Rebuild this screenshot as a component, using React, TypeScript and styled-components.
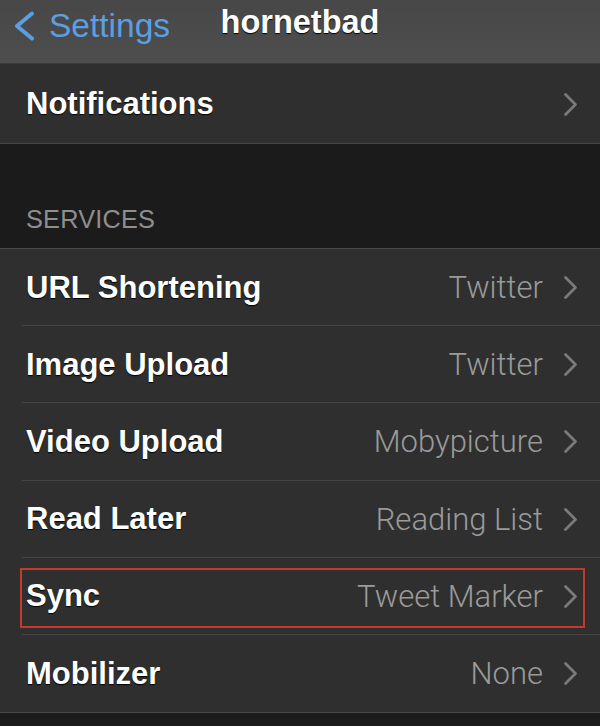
import React from "react";
import styled, { createGlobalStyle } from "styled-components";

const GlobalStyle = createGlobalStyle`
  html, body {
    margin: 0;
    padding: 0;
    background: #1b1b1b;
  }
  body {
    font-family: "Liberation Sans", Arial, sans-serif;
  }
`;

const Screen = styled.div`
  width: 600px;
  min-height: 726px;
  background: #1b1b1b;
  overflow: hidden;
`;

const NavBar = styled.div`
  position: relative;
  height: 63px;
  display: flex;
  align-items: flex-start;
  justify-content: center;
  background: linear-gradient(#474747, #4e4e4e);
  border-bottom: 1px solid #3a3a3a;
`;

const BackButton = styled.div`
  position: absolute;
  left: 12px;
  top: 8px;
  display: flex;
  align-items: center;
  gap: 13px;
  color: #5b9fe2;
  font-size: 33.5px;
  line-height: 36px;
`;

const Title = styled.div`
  margin-top: 4px;
  color: #ffffff;
  font-size: 32.5px;
  font-weight: bold;
  line-height: 36px;
  text-shadow: 0 1px 1px #000;
`;

const Group = styled.div<{ $top?: boolean }>`
  background: #2f2f2f;
  border-top: 1px solid ${(p) => (p.$top ? "#4a4a4a" : "transparent")};
  border-bottom: 1px solid #474747;
`;

const SectionHeader = styled.div`
  height: 104px;
  display: flex;
  align-items: flex-end;
  padding: 0 0 14px 26px;
  box-sizing: border-box;
  color: #8e8e8e;
  font-size: 25.3px;
  letter-spacing: 0.2px;
`;

const Row = styled.div<{ $last?: boolean; $tall?: boolean }>`
  position: relative;
  height: ${(p) => (p.$tall ? "78px" : "77.2px")};
  display: flex;
  align-items: center;
  padding: 0 22px 0 26px;
  box-sizing: border-box;
  &::after {
    content: "";
    display: ${(p) => (p.$last ? "none" : "block")};
    position: absolute;
    left: 22px;
    right: 0;
    bottom: 0;
    height: 1px;
    background: #454545;
  }
`;

const Label = styled.div`
  flex: 1;
  color: #ffffff;
  font-size: 31px;
  font-weight: bold;
  text-shadow: 0 1px 1px #000;
`;

const Value = styled.div`
  color: #9a9a9a;
  font-family: Roboto, "Liberation Sans", sans-serif;
  font-weight: 300;
  font-size: 31px;
  margin-right: 20px;
`;

const Highlight = styled.div`
  position: absolute;
  left: 20px;
  right: 15px;
  top: 10px;
  bottom: 7px;
  border: 2px solid #c23a2b;
  pointer-events: none;
`;

const Chevron = () => (
  <svg width="15" height="25" viewBox="0 0 15 25">
    <path d="M2.5 2.5 L12.5 12.5 L2.5 22.5" fill="none" stroke="#7a7a7a" strokeWidth="2.8" strokeLinecap="round" strokeLinejoin="round" />
  </svg>
);

const BackChevron = () => (
  <svg width="24" height="30" viewBox="0 0 24 30">
    <path d="M20 2.5 L5 15 L20 27.5" fill="none" stroke="#5b9fe2" strokeWidth="4" strokeLinecap="round" strokeLinejoin="round" />
  </svg>
);

const services = [
  { label: "URL Shortening", value: "Twitter" },
  { label: "Image Upload", value: "Twitter" },
  { label: "Video Upload", value: "Mobypicture" },
  { label: "Read Later", value: "Reading List" },
  { label: "Sync", value: "Tweet Marker", marked: true },
  { label: "Mobilizer", value: "None" },
];

export default function App() {
  return (
    <>
      <GlobalStyle />
      <Screen>
        <NavBar>
          <BackButton>
            <BackChevron />
            <span>Settings</span>
          </BackButton>
          <Title>hornetbad</Title>
        </NavBar>

        <Group>
          <Row $last $tall>
            <Label>Notifications</Label>
            <Chevron />
          </Row>
        </Group>

        <SectionHeader>SERVICES</SectionHeader>

        <Group $top>
          {services.map((s, i) => (
            <Row key={s.label} $last={i === services.length - 1}>
              <Label>{s.label}</Label>
              <Value>{s.value}</Value>
              <Chevron />
              {s.marked && <Highlight />}
            </Row>
          ))}
        </Group>
      </Screen>
    </>
  );
}
